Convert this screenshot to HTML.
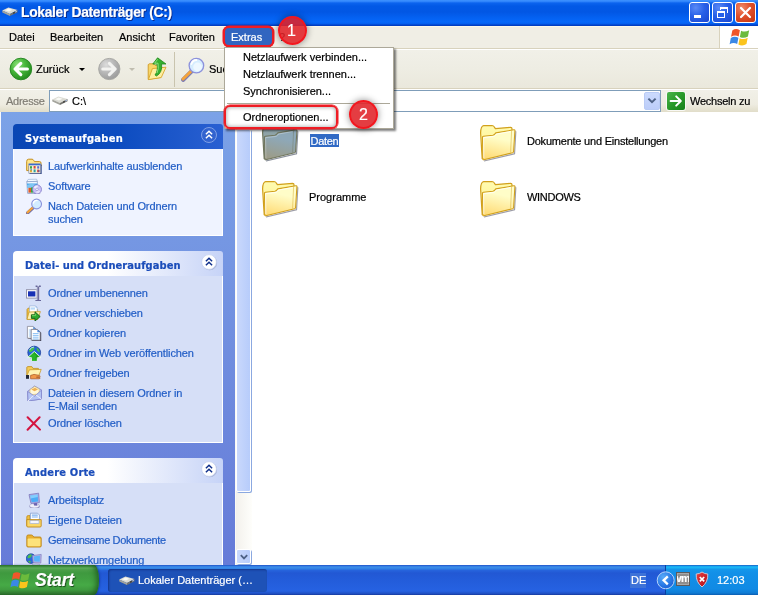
<!DOCTYPE html>
<html lang="de">
<head>
<meta charset="utf-8">
<title>Lokaler Datenträger (C:)</title>
<style>
*{box-sizing:border-box;margin:0;padding:0}
html,body{width:758px;height:595px;overflow:hidden;background:#fff}
body{position:relative;will-change:transform;-webkit-text-stroke:.2px;font-family:"Liberation Sans",sans-serif;font-size:11px;color:#000}
.abs{position:absolute}
.t{position:absolute;white-space:nowrap;line-height:14px;height:14px}
/* title bar */
#title{left:0;top:0;width:758px;height:26px;background:linear-gradient(180deg,#3f93ff 0,#2f84fb 1.5px,#0c64ee 3px,#0259e6 6px,#0257e4 12px,#0460f0 17px,#0668fa 22px,#0560f0 23.5px,#0344cc 25px,#0238b8 26px)}
#title .tt{left:21px;top:5px;color:#fff;font-weight:bold;font-size:13.8px;letter-spacing:-0.3px;line-height:16px;height:16px;text-shadow:1px 1px 0 #0a2a8a}
.cb{position:absolute;top:2px;width:21px;height:21px;border:1px solid #fff;border-radius:3px;background:radial-gradient(circle at 30% 25%,#5a8af6 0,#2860e8 45%,#1a46d0 100%)}
.cb.x{background:radial-gradient(circle at 30% 25%,#f08a68 0,#e0502c 45%,#c4340f 100%)}
/* menu */
#menu{left:0;top:26px;width:758px;height:22px;background:#f0eee5;border-top:1px solid #fbf8ea}
#menu .t{top:3px}
#logo{left:719px;top:26px;width:39px;height:22px;background:#fff;border-left:1px solid #d8d2bd}
#l1{left:0;top:48px;width:758px;height:1px;background:#d8d2bd}
#l2{left:0;top:49px;width:758px;height:1px;background:#fff}
/* toolbar */
#tb{left:0;top:50px;width:758px;height:38px;background:linear-gradient(180deg,#f1f0e8 0,#eeede3 50%,#eae8dc 100%)}
#l3{left:0;top:88px;width:758px;height:1px;background:#d8d2bd}
#addr{left:0;top:89px;width:758px;height:23px;background:linear-gradient(180deg,#f1f0e8 0,#eeece1 65%,#e1ddc9 100%);border-top:1px solid #fff}
#ainp{left:49px;top:90px;width:612px;height:22px;background:#fff;border:1px solid #7f9db9}
/* left pane */
#lp{left:0;top:112px;width:235px;height:453px;background:linear-gradient(180deg,#7ba2e7 0,#667bd8 100%);overflow:hidden}
.ph{position:absolute;left:13px;width:210px;height:25px;border-radius:4px 3px 0 0}
.ph .t{left:12px;top:8px;font-weight:bold;font-size:11px;letter-spacing:.2px;font-family:"DejaVu Sans Condensed","DejaVu Sans","Liberation Sans",sans-serif}
.ph.a{background:linear-gradient(90deg,#0a46b4 0,#0c4cc0 50%,#2a60d2 100%);color:#fff}
.ph.b{background:linear-gradient(90deg,#fff 0,#fff 45%,#c6d3f7 100%);color:#1b4dba}
.pb{position:absolute;left:13px;width:210px;background:#d6dff7;border:1px solid #fff;border-top:0}
.pb.a{background:#eff3ff}
.lk{position:absolute;left:48px;color:#215dc6;white-space:nowrap;line-height:13px;letter-spacing:-0.1px}
.chev{position:absolute;left:188px;top:3px;width:18px;height:18px}
.ic{position:absolute;left:26px;width:16px;height:16px}
/* scrollbar */
#sb{left:235px;top:112px;width:17px;height:453px;background:linear-gradient(90deg,#f3f1ec 0,#fefefb 100%);border-left:1px solid #fbfaf4}
.sbtn{position:absolute;left:0;width:15px;background:linear-gradient(90deg,#c9d8fc 0,#b7ccfb 100%);border:1px solid #fff;border-radius:2px;box-shadow:1px 1px 0 #8ba8e0}
/* content */
.fl{position:absolute;white-space:nowrap;line-height:13px;height:13px}
/* taskbar */
#task{left:0;top:565px;width:758px;height:30px;background:linear-gradient(180deg,#1f50c2 0,#2f74e0 1px,#3d8ee8 2px,#3384e6 3.5px,#2663dc 5.5px,#2258d4 8px,#235cda 15px,#2662e2 26px,#1f50c4 28.5px,#173a9c 30px)}
/* annotations */
.rb{position:absolute;border:2px solid #ee1c24;border-radius:6px;box-shadow:0 0 0 .5px #ee1c24,inset 0 0 4px rgba(0,0,0,.4)}
.rc{position:absolute;width:29px;height:29px;border-radius:50%;background:rgba(224,34,40,.88);border:2px solid rgba(242,22,30,.96);color:#fff;text-align:center;font-size:16px;line-height:25px;box-shadow:0 0 7px rgba(0,0,0,.45)}
</style>
</head>
<body>
<!-- title bar -->
<div id="title" class="abs">
  <svg class="abs drv" style="left:2px;top:7px" width="16" height="10" viewBox="0 0 16 10"><path d="M.2 3.4 L6.4 .5 L15.5 3.1 L8 7Z" fill="#dcdcd4"/><path d="M3 3.2 L6.6 1.6 L10.4 2.8 L7 4.4Z" fill="#fafaf6"/><path d="M.2 3.4 L8 7 L8 9 L.4 5.4Z" fill="#a4a49c"/><path d="M8 7 L15.5 3.1 L15.5 5.2 L8 9Z" fill="#74746f"/><path d="M11.4 5.3 L12.6 4.7 L12.6 6.3 L11.4 6.9Z" fill="#2a2a2a"/><path d="M13.4 4.5 L14.8 3.8 L14.8 4.8 L13.4 5.5Z" fill="#b4ccff"/></svg>
  <div class="t tt">Lokaler Datenträger (C:)</div>
  <div class="cb" style="left:689px"><div class="abs" style="left:4px;top:12px;width:7px;height:3px;background:#fff"></div></div>
  <div class="cb" style="left:712px"><div class="abs" style="left:7px;top:4px;width:8px;height:6px;border:1px solid #fff;border-top-width:2px;border-left:0;border-bottom:0"></div><div class="abs" style="left:7px;top:4px;width:1px;height:3px;background:#fff"></div><div class="abs" style="left:4px;top:8px;width:8px;height:7px;border:1px solid #fff;border-top-width:2px;background:#2860e8"></div></div>
  <div class="cb x" style="left:735px"><svg class="abs" style="left:3px;top:3px" width="13" height="13" viewBox="0 0 13 13"><path d="M2 2 L11 11 M11 2 L2 11" stroke="#fff" stroke-width="2.2" stroke-linecap="round"/></svg></div>
</div>
<!-- menu bar -->
<div id="menu" class="abs">
  <div class="t" style="left:9px">Datei</div>
  <div class="t" style="left:50px">Bearbeiten</div>
  <div class="t" style="left:119px">Ansicht</div>
  <div class="t" style="left:169px">Favoriten</div>
  <div class="rb" style="left:223px;top:-1px;width:51px;height:21px;background:#3165c0;box-shadow:0 0 0 .5px #ee1c24"></div>
  <div class="t" style="left:231px;color:#fff">Extras</div>
  <div class="t" style="left:279px">?</div>
</div>
<div id="logo" class="abs"><svg class="abs" style="left:9px;top:0px" width="22" height="22" viewBox="-1 -1 17 18"><path d="M1.2 2.6 Q4 .6 7.4 2.4 L6.4 7.6 Q3.2 5.8 .2 7.8Z" fill="#f0562a"/><path d="M8.4 2.8 Q11.6 4.4 15 2.4 L14 7.6 Q10.8 9.6 7.4 8Z" fill="#6cbb3c"/><path d="M0 8.8 Q3 6.8 6.2 8.6 L5.2 13.8 Q2.2 12 -1 14Z" fill="#3a88e6"/><path d="M7.2 9 Q10.6 10.6 13.8 8.6 L12.8 13.8 Q9.6 15.8 6.2 14.2Z" fill="#fbc41c"/></svg></div>
<div id="l1" class="abs"></div><div id="l2" class="abs"></div>
<div id="tb" class="abs"></div>
<div id="l3" class="abs"></div>
<div id="addr" class="abs"></div>
<div id="ainp" class="abs"></div>
<!-- left pane -->
<div id="lp" class="abs">
  <div class="abs" style="left:0;top:0;width:1px;height:453px;background:#f4f7fe"></div>
  <div class="ph a" style="top:12px"><div class="t" style="letter-spacing:.3px">Systemaufgaben</div></div>
  <div class="pb a" style="top:37px;height:87px"></div>
  <div class="ph b" style="top:139px"><div class="t" style="letter-spacing:.08px">Datei- und Ordneraufgaben</div></div>
  <div class="pb" style="top:164px;height:167px"></div>
  <div class="ph b" style="top:346px"><div class="t" style="letter-spacing:.18px">Andere Orte</div></div>
  <div class="pb" style="top:371px;height:100px"></div>
<!--LINKS-->
  <div class="lk" style="top:48px">Laufwerkinhalte ausblenden</div>
  <div class="lk" style="top:68px">Software</div>
  <div class="lk" style="top:88px">Nach Dateien und Ordnern<br>suchen</div>
  <div class="lk" style="top:175px">Ordner umbenennen</div>
  <div class="lk" style="top:195px">Ordner verschieben</div>
  <div class="lk" style="top:215px">Ordner kopieren</div>
  <div class="lk" style="top:235px">Ordner im Web veröffentlichen</div>
  <div class="lk" style="top:255px">Ordner freigeben</div>
  <div class="lk" style="top:275px">Dateien in diesem Ordner in<br>E-Mail senden</div>
  <div class="lk" style="top:305px">Ordner löschen</div>
  <div class="lk" style="top:382px">Arbeitsplatz</div>
  <div class="lk" style="top:402px">Eigene Dateien</div>
  <div class="lk" style="top:422px;letter-spacing:-0.35px">Gemeinsame Dokumente</div>
  <div class="lk" style="top:442px">Netzwerkumgebung</div>
<!--ICONS-->
  <svg class="abs" style="left:26px;top:46px" width="16" height="16" viewBox="0 0 16 16"><path d="M.7 12.6 L.7 3.4 Q.7 1.2 2.6 1.2 L6 1.2 Q7 1.2 7.6 2.2 L8.4 3.6 L13.6 3.6 Q15 3.6 15 5 L15 8 L3 8 L3 12.6Z" fill="#ffe68c" stroke="#c48e1c" stroke-width="1"/><rect x="3.6" y="6.6" width="12" height="9.6" fill="#1c3278"/><rect x="2.8" y="5.8" width="11.8" height="9.4" fill="#f5f1da" stroke="#7c86a8" stroke-width=".6"/><rect x="2.8" y="5.8" width="11.8" height="1.5" fill="#3a6cd0"/><rect x="4" y="8.2" width="2" height="2.4" fill="#3aa848"/><rect x="7.6" y="8" width="2" height="2.6" fill="#d84838"/><rect x="11.2" y="8.2" width="2" height="2.4" fill="#5a6cd0"/><rect x="4" y="11.6" width="2" height="2.6" fill="#e8b030"/><rect x="4.6" y="11.2" width="1.2" height="1.2" fill="#3a78d8"/><rect x="7.6" y="11.4" width="2" height="2.8" fill="#2aa0a0"/><rect x="11.2" y="11.6" width="2" height="2.6" fill="#d84030"/><rect x="12.4" y="12.2" width="1.2" height="1.6" fill="#3a62c8"/></svg>
  <svg class="abs" style="left:26px;top:66px" width="16" height="16" viewBox="0 0 16 16"><ellipse cx="8" cy="15.2" rx="6.6" ry="1" fill="#8a8aa8" opacity=".5"/><path d="M.8 3.6 L2.2 1.4 L10.6 1.2 L11.4 3.4Z" fill="#f4faff" stroke="#9ab0d4" stroke-width=".7"/><path d="M.8 3.6 L11.4 3.4 L11 15 L1.6 15.2Z" fill="#eef6ff" stroke="#8098c4" stroke-width=".7"/><path d="M1 5.6 L11.3 5.4 L11.2 9.6 L1.2 9.8Z" fill="#4aa6ea"/><path d="M1.2 7 L6 5.6 L11.3 7.4 L11.2 9.6 L1.3 9.8Z" fill="#8cd0f8" opacity=".8"/><rect x="2.4" y="9.8" width="2.6" height="4.8" fill="#e05a28"/><rect x="5" y="9.4" width="2.4" height="5.2" fill="#34a83e"/><circle cx="11" cy="11.4" r="4.5" fill="#c8c0f6" stroke="#8078c8" stroke-width=".8"/><path d="M7.6 9.6 A4 4 0 0 1 12 7.4 L11 11.4Z" fill="#fff" opacity=".7"/><path d="M14.4 13.2 A4 4 0 0 1 10 15.4 L11 11.4Z" fill="#fff" opacity=".5"/><circle cx="11" cy="11.4" r="1.3" fill="#f6f4ff" stroke="#8a84c8" stroke-width=".6"/></svg>
  <svg class="abs" style="left:26px;top:86px" width="16" height="16" viewBox="0 0 16 16"><path d="M7.6 9.4 L1.6 15" stroke="#6a6aa8" stroke-width="3.2" stroke-linecap="round"/><path d="M7.4 9 L1.6 14.4" stroke="#f3a23a" stroke-width="2.2" stroke-linecap="round"/><circle cx="10.6" cy="6" r="4.9" fill="#d2ecff" stroke="#8c94dc" stroke-width="1.1"/><path d="M7.4 5 A3.6 3.6 0 0 1 11 2.4" stroke="#fff" stroke-width="1.4" fill="none" stroke-linecap="round"/></svg>
  <svg class="abs" style="left:26px;top:173px" width="16" height="16" viewBox="0 0 16 16"><rect x=".5" y="4.7" width="10.6" height="8.4" fill="#fff" stroke="#8c8ca4" stroke-width=".9"/><rect x="2" y="6.3" width="7.4" height="5.2" fill="#1830b4"/><path d="M12.2 1.6 L12.2 15.2" stroke="#c4c4dc" stroke-width="3.2"/><path d="M12.2 1.4 L12.2 15.4 M9.6 1.2 L11.4 1.2 M13 1.2 L14.8 1.2 M9.4 15.6 L15 15.6" stroke="#66669a" stroke-width="1.4" fill="none"/></svg>
  <svg class="abs" style="left:26px;top:193px" width="16" height="16" viewBox="0 0 16 16"><path d="M1 4.6 L1 14.4 L11.6 14.4 L11.6 4.6 L7 4.6 L5.8 3.2 L2 3.2Z" fill="#f0c048" stroke="#b88a1e" stroke-width=".8"/><path d="M3.6 .9 L9.6 .9 L11.2 2.6 L11.2 8 L3.6 8Z" fill="#fff" stroke="#9ab4dc" stroke-width=".7"/><path d="M4.6 2.4 L9 2.4 L9 4.6 L4.6 4.6Z" fill="#b8d8f8"/><path d="M9.6 .9 L9.6 2.6 L11.2 2.6Z" fill="#78a8e8"/><path d="M1 14.4 L3 7 L14.4 6.6 L11.6 14.4Z" fill="#fdf0b0" stroke="#c99a2a" stroke-width=".8"/><path d="M5.4 9.8 L9 9.8 L9 6.8 L14.2 11.6 L9 16 L9 13.4 L5.4 13.4Z" fill="#2ea82e" stroke="#125c12" stroke-width=".9" stroke-linejoin="round"/><path d="M6 10.6 L9.6 10.6 L9.6 8.6" stroke="#7ee070" stroke-width=".8" fill="none"/></svg>
  <svg class="abs" style="left:26px;top:213px" width="16" height="16" viewBox="0 0 16 16"><path d="M2.2 2.4 L8.4 2.4 L10.8 4.8 L10.8 14 L2.2 14Z" fill="#50505e"/><path d="M1.4 1.4 L7.2 1.4 L9.8 4 L9.8 13.2 L1.4 13.2Z" fill="#fff" stroke="#8a8a98" stroke-width=".8"/><path d="M7.2 1.4 L7.2 4 L9.8 4Z" fill="#5a94e0"/><path d="M2.8 5 L5 5 M2.8 7 L5 7 M2.8 9 L5 9 M2.8 11 L5 11" stroke="#9cc8f4" stroke-width="1"/><path d="M6 5.2 L12.6 5.2 L15.2 7.8 L15.2 16 L6 16Z" fill="#3c3c4c"/><path d="M5.2 4.4 L11.4 4.4 L14.2 7.2 L14.2 15.2 L5.2 15.2Z" fill="#fff" stroke="#6c6c7c" stroke-width=".8"/><path d="M11.4 4.4 L11.4 7.2 L14.2 7.2Z" fill="#4a8ae0"/><path d="M6.8 8.6 L12.6 8.6 M6.8 10.4 L12.6 10.4 M6.8 12.2 L12.6 12.2 M6.8 14 L12.6 14" stroke="#8cc0f4" stroke-width="1"/></svg>
  <svg class="abs" style="left:26px;top:233px" width="16" height="16" viewBox="0 0 16 16"><circle cx="8.2" cy="7.6" r="6.4" fill="#2466d8" stroke="#183c98" stroke-width=".8"/><path d="M3 5.4 Q4.4 2 8 1.8 Q9.4 3.4 7.4 5 Q6 7.2 3.6 7Z" fill="#48c048"/><path d="M10.4 2.6 Q13.2 3.8 14 6.8 Q12.4 7 11.2 5.4Z" fill="#48c048"/><path d="M3.6 5 A5 5 0 0 1 8 2" stroke="#b0d8ff" stroke-width="1" fill="none"/><path d="M8.3 6.4 L15 12.6 L11.2 12.6 L11.2 16.4 L5.4 16.4 L5.4 12.6 L1.6 12.6Z" fill="#28b428" stroke="#f0fff0" stroke-width=".9" stroke-linejoin="round"/><path d="M8.3 8.2 L12 11.8 L10.2 11.8 L10.2 15.6" stroke="#168a16" stroke-width="1" fill="none" opacity=".6"/></svg>
  <svg class="abs" style="left:26px;top:253px" width="16" height="16" viewBox="0 0 16 16"><path d="M.8 2.2 L.8 10.6 L12.4 10.6 L12.4 3.4 L7 3.4 L5.8 1.6 L1.8 1.6Z" fill="#f4cc58" stroke="#bc8c1e" stroke-width=".8"/><path d="M.8 10.8 L3.4 4.8 L15.2 4.4 L12.8 10.8Z" fill="#fff2b0" stroke="#c99a2a" stroke-width=".8"/><rect x="0" y="10" width="3.2" height="3.8" fill="#222838"/><rect x="3.2" y="10" width="1.4" height="3.8" fill="#f4f4f8"/><path d="M4.6 10.4 L8 9.4 L13.6 10.4 Q15 11 13.6 11.8 L10.4 12.2 L14 12.6 Q14.6 13.6 13 13.8 L4.6 13.8Z" fill="#f09848" stroke="#a85420" stroke-width=".7"/></svg>
  <svg class="abs" style="left:26px;top:273px" width="16" height="16" viewBox="0 0 16 16"><path d="M1.6 6.4 L8.6 1 L15.6 5 L15.4 14 L2 16Z" fill="#c8d0f8" stroke="#8488cc" stroke-width=".9"/><path d="M4 4.6 L8.8 1.6 L13.2 4 L13.2 9 L4 9.8Z" fill="#fff8d8" stroke="#d8b860" stroke-width=".6"/><path d="M5.4 4.6 L9 2.8 L12 4.4 L8.4 6.2Z" fill="#f0b050"/><path d="M1.6 6.4 L8.6 11.2 L15.6 5 L15.4 14 L2 16Z" fill="#b4c4f4" stroke="#8488cc" stroke-width=".8"/><path d="M2 16 L7.4 10.4 M15.4 14 L10 10" stroke="#f0f4ff" stroke-width=".9"/></svg>
  <svg class="abs" style="left:26px;top:303px" width="16" height="16" viewBox="0 0 16 16"><path d="M1.6 2.2 L14 14.6 M13.6 2.2 L1.6 14.8" stroke="#d41440" stroke-width="2" stroke-linecap="round" fill="none"/></svg>
  <svg class="abs" style="left:26px;top:380px" width="16" height="16" viewBox="0 0 16 16"><ellipse cx="8.6" cy="14.4" rx="5" ry="2.2" fill="#5a5490" opacity=".7"/><ellipse cx="8.4" cy="13.8" rx="4.8" ry="2.2" fill="#f0f0fa" stroke="#a0a0cc" stroke-width=".6"/><path d="M7.4 10 L11 11 L11.4 13.8 L8 13.4Z" fill="#6a62b0"/><path d="M3 2.6 L12.6 1.2 L13.4 10.6 L5 11.4Z" fill="#b4b0e6" stroke="#7c78bc" stroke-width=".8" stroke-linejoin="round"/><path d="M4.2 3.6 L11.6 2.4 L12.2 9.6 L5.6 10.2Z" fill="#4cacf6"/><path d="M4.2 3.6 L11.6 2.4 L11.8 5 L4.6 6.6Z" fill="#8cd4ff" opacity=".85"/></svg>
  <svg class="abs" style="left:26px;top:400px" width="16" height="16" viewBox="0 0 16 16"><path d="M.8 5 Q.8 3.6 2.2 3.6 L4 3.6 L4 13.8 L.8 13.8Z" fill="#f0c040" stroke="#c08a1c" stroke-width=".8"/><path d="M4.4 1.2 L11.6 1.2 L13.4 3 L13.4 9 L4.4 9Z" fill="#fff" stroke="#7c9cd0" stroke-width=".8"/><path d="M5.8 3.2 L11.8 3.2 M5.8 5 L11.8 5" stroke="#7cb0f0" stroke-width="1.2"/><path d="M.8 7.6 L15.2 7.6 L15.2 14 Q15.2 15 14 15 L2 15 Q.8 15 .8 14Z" fill="#fbd868" stroke="#c08a1c" stroke-width=".9"/><rect x="4" y="8.6" width="9" height="3" fill="#f4f6ff" stroke="#98a8d0" stroke-width=".6"/></svg>
  <svg class="abs" style="left:26px;top:420px" width="16" height="16" viewBox="0 0 16 16"><path d="M.8 4.4 Q.8 3 2.2 3 L5.4 3 Q6.4 3 7 4 L7.8 5 L14 5 Q15.2 5 15.2 6.2 L15.2 14 Q15.2 15 14 15 L2 15 Q.8 15 .8 14Z" fill="#e8b030" stroke="#bc861a" stroke-width=".9"/><path d="M1.6 7.4 Q1.6 6.6 2.6 6.6 L13.4 6.6 Q14.4 6.6 14.4 7.4 L14.4 13.4 Q14.4 14.2 13.4 14.2 L2.6 14.2 Q1.6 14.2 1.6 13.4Z" fill="#fde27a"/></svg>
  <svg class="abs" style="left:26px;top:440px" width="16" height="16" viewBox="0 0 16 16"><circle cx="5" cy="6.6" r="4.8" fill="#2c6ad8" stroke="#1a3c98" stroke-width=".7"/><path d="M1.6 4.6 Q3 2 5.6 2.4 Q6.4 4 4.6 5.6 Q3 6.8 1.6 6Z" fill="#4cc04c"/><path d="M2 9 Q4 8 5 10 L3.6 11Z" fill="#4cc04c"/><path d="M6.6 3.6 L15.2 2.4 L14.8 11 L7.2 10.6Z" fill="#b8b4e8" stroke="#8a86c4" stroke-width=".8"/><path d="M7.8 4.6 L14 3.6 L13.8 9.8 L8.2 9.6Z" fill="#58b4f8"/><ellipse cx="10" cy="13.6" rx="4.4" ry="1.8" fill="#dcdcf0" stroke="#9494c0" stroke-width=".6"/></svg>
  <svg class="abs" style="left:200.3px;top:14.4px" width="18" height="18" viewBox="0 0 18 18"><circle cx="9" cy="9" r="7.5" fill="#3263cf" stroke="#7f9fe6" stroke-width="1"/><path d="M5.9 8.3 L9 5.3 L12.1 8.3 M5.9 12.3 L9 9.3 L12.1 12.3" stroke="#fff" stroke-width="1.5" fill="none"/></svg>
  <svg class="abs" style="left:200.3px;top:141.4px" width="19" height="19" viewBox="0 0 19 19"><circle cx="9.7" cy="9.8" r="7.4" fill="#8a94b8" opacity=".55"/><circle cx="9" cy="9" r="7.4" fill="#fff" stroke="#c4d0f0" stroke-width=".8"/><path d="M5.9 8.3 L9 5.3 L12.1 8.3 M5.9 12.3 L9 9.3 L12.1 12.3" stroke="#10308c" stroke-width="1.5" fill="none"/></svg>
  <svg class="abs" style="left:200.3px;top:348.4px" width="19" height="19" viewBox="0 0 19 19"><circle cx="9.7" cy="9.8" r="7.4" fill="#8a94b8" opacity=".55"/><circle cx="9" cy="9" r="7.4" fill="#fff" stroke="#c4d0f0" stroke-width=".8"/><path d="M5.9 8.3 L9 5.3 L12.1 8.3 M5.9 12.3 L9 9.3 L12.1 12.3" stroke="#10308c" stroke-width="1.5" fill="none"/></svg>
</div>
<div id="sb" class="abs">
  <div class="sbtn" style="top:0;height:16px"><svg class="abs" style="left:3px;top:4px" width="8" height="6" viewBox="0 0 8 6"><path d="M.8 4.8 L4 1.6 L7.2 4.8" stroke="#4d6185" stroke-width="1.8" fill="none"/></svg></div>
  <div class="sbtn" style="top:17px;height:363px"></div>
  <div class="sbtn" style="top:437px;height:15px"><svg class="abs" style="left:3px;top:4px" width="8" height="6" viewBox="0 0 8 6"><path d="M.8 1.2 L4 4.4 L7.2 1.2" stroke="#4d6185" stroke-width="1.8" fill="none"/></svg></div>
</div>

<!-- toolbar content -->
<div id="tbc" class="abs" style="left:0;top:50px;width:758px;height:38px">
  <svg class="abs" style="left:8px;top:6px" width="26" height="26" viewBox="0 0 26 26"><defs><radialGradient id="gb" cx=".35" cy=".3" r=".75"><stop offset="0" stop-color="#8fe27c"/><stop offset=".45" stop-color="#49b83c"/><stop offset="1" stop-color="#218a1c"/></radialGradient></defs><circle cx="12.9" cy="13" r="10.8" fill="url(#gb)" stroke="#2a8a26" stroke-width="1"/><path d="M19.4 13 L8 13 M12.8 7.4 L7 13 L12.8 18.6" stroke="#fff" stroke-width="3.1" fill="none" stroke-linecap="round" stroke-linejoin="round"/></svg>
  <div class="t" style="left:36px;top:12px">Zurück</div>
  <div class="abs" style="left:79px;top:18px;border:3px solid transparent;border-top:3px solid #000;border-bottom:0;width:0;height:0"></div>
  <svg class="abs" style="left:96px;top:6px" width="26" height="26" viewBox="0 0 26 26"><defs><radialGradient id="gf" cx=".35" cy=".3" r=".75"><stop offset="0" stop-color="#dcdcdc"/><stop offset=".5" stop-color="#b8b8b8"/><stop offset="1" stop-color="#9a9a9a"/></radialGradient></defs><circle cx="13.3" cy="13" r="10.6" fill="url(#gf)" stroke="#a8a8a4" stroke-width="1"/><path d="M6.8 13 L18.2 13 M13.4 7.4 L19.2 13 L13.4 18.6" stroke="#f2f2f0" stroke-width="3.1" fill="none" stroke-linecap="round" stroke-linejoin="round"/></svg>
  <div class="abs" style="left:129px;top:18px;border:3px solid transparent;border-top:3px solid #c0bdb0;border-bottom:0;width:0;height:0"></div>
  <svg class="abs" style="left:146px;top:6px" width="22" height="26" viewBox="0 0 22 26"><path d="M2.2 8.6 L2.2 23.4 L14.6 21.4 L14.6 9.4 L9 9.4 L7.6 7.8 L3.4 7.8Z" fill="#f8d668" stroke="#cf9a26" stroke-width=".9"/><path d="M2.4 23.6 L6.4 12.6 L20 11.2 L15.2 21.6Z" fill="#fdeea0" stroke="#d9a62c" stroke-width=".9"/><path d="M11.6 1.8 L20 8 L15.6 8 Q16.6 16.4 10.6 20 L9 19 Q12.4 14.6 11 8 L6.8 8Z" fill="#35b02f" stroke="#1f8a1c" stroke-width=".8" stroke-linejoin="round"/><path d="M11.6 3.4 L8.6 7.2 L12 7.2 Q13 13 11 17" stroke="#8fe080" stroke-width="1" fill="none"/></svg>
  <div class="abs" style="left:174px;top:2px;width:1px;height:35px;background:#c9c4ae"></div>
  <svg class="abs" style="left:180px;top:6px" width="26" height="26" viewBox="0 0 26 26"><path d="M11.4 15.6 L3.2 23.8" stroke="#7c7cb4" stroke-width="4.2" stroke-linecap="round"/><path d="M11 15.2 L3 23" stroke="#f4a43c" stroke-width="3" stroke-linecap="round"/><circle cx="16.4" cy="9.6" r="7.3" fill="#d6edff" stroke="#8d92dc" stroke-width="1.3"/><circle cx="17.6" cy="11" r="4.4" fill="#eef8ff"/><path d="M11.4 8 A5.4 5.4 0 0 1 16.4 4" stroke="#fff" stroke-width="1.8" fill="none" stroke-linecap="round"/></svg>
  <div class="t" style="left:209px;top:12px">Suchen</div>
</div>
<!-- address -->
<div class="t" style="left:6px;top:94px;color:#7f7c73;letter-spacing:-0.25px">Adresse</div>
<svg class="abs drv" style="left:52px;top:96px" width="16" height="10" viewBox="0 0 16 10"><path d="M.2 3.4 L6.4 .5 L15.5 3.1 L8 7Z" fill="#dcdcd4"/><path d="M3 3.2 L6.6 1.6 L10.4 2.8 L7 4.4Z" fill="#fafaf6"/><path d="M.2 3.4 L8 7 L8 9 L.4 5.4Z" fill="#a4a49c"/><path d="M8 7 L15.5 3.1 L15.5 5.2 L8 9Z" fill="#74746f"/><path d="M11.4 5.3 L12.6 4.7 L12.6 6.3 L11.4 6.9Z" fill="#2a2a2a"/><path d="M13.4 4.5 L14.8 3.8 L14.8 4.8 L13.4 5.5Z" fill="#b4ccff"/></svg>
<div class="t" style="left:72px;top:94px">C:\</div>
<div class="abs" style="left:644px;top:92px;width:16px;height:18px;background:linear-gradient(180deg,#cbdafd 0,#bccdf9 100%);border:1px solid #b9cbf5;border-radius:2px"></div>
<svg class="abs" style="left:647px;top:97px" width="10" height="8" viewBox="0 0 10 8"><path d="M1.4 1.6 L5 5.2 L8.6 1.6" stroke="#4d6185" stroke-width="2" fill="none"/></svg>
<div class="abs" style="left:666px;top:91px;width:20px;height:20px;background:#f8f8f4;border-radius:3px"></div>
<div class="abs" style="left:667px;top:92px;width:18px;height:18px;background:linear-gradient(135deg,#4ab34a 0,#2a9a2a 50%,#17801a 100%);border-radius:2px"></div>
<svg class="abs" style="left:669px;top:94px" width="14" height="14" viewBox="0 0 14 14"><path d="M1.6 7 L11.6 7 M7.2 2.4 L11.8 7 L7.2 11.6" stroke="#fff" stroke-width="2" fill="none" stroke-linecap="round" stroke-linejoin="round"/></svg>
<div class="t" style="left:690px;top:94px;letter-spacing:-0.25px">Wechseln zu</div>
<!-- content -->
<!--FOLDERS-->
<svg class="abs" style="left:256px;top:120px" width="50" height="46" viewBox="0 0 50 46"><defs><linearGradient id="g1a" x1="0" y1="0" x2="0" y2="1"><stop offset="0" stop-color="#90a8b0"/><stop offset="1" stop-color="#8c9890"/></linearGradient><linearGradient id="g1b" x1=".62" y1="0" x2=".38" y2="1"><stop offset="0" stop-color="#8ea8b8"/><stop offset=".3" stop-color="#8ea8b8"/><stop offset="1" stop-color="#9c9c88"/></linearGradient></defs><path d="M9.6 40.5 L40 33.3 L41.3 10.6 L42.4 11.6 L41.1 34.3 L10.2 41.6Z" fill="#3c4658" opacity=".6"/><path d="M8.2 38.6 L6.6 13 Q6.8 6 9.6 5.7 L18 5.5 Q19.4 5.5 20.2 6.8 L21.4 8.6 L36.6 7.3 Q38 7.3 38 8.8 L38 20Z" fill="url(#g1a)" stroke="#70765e" stroke-width="1.2" stroke-linejoin="round"/><path d="M8.5 17.2 Q8.4 16.4 9.4 16.3 L18.8 15.3 Q20.2 15.1 21 13.9 L21.8 12.9 L39.8 9.8 Q41 9.6 40.9 10.8 L39.6 31.6 Q39.6 32.5 38.6 32.8 L9.8 39.7 Q8.8 39.9 8.8 38.8Z" fill="url(#g1b)" stroke="#70765e" stroke-width="1.1" stroke-linejoin="round"/><path d="M37.6 10.8 L36.6 32.4" stroke="#70765e" stroke-width=".8" opacity=".55"/><path d="M9.8 38 L9.6 17.6 L19.2 16.5 Q21 16.2 21.8 15 L22.4 14 L36.6 11.6" stroke="#fff" stroke-width=".9" fill="none" opacity=".35"/></svg>
<svg class="abs" style="left:256px;top:176px" width="50" height="46" viewBox="0 0 50 46"><defs><linearGradient id="g2a" x1="0" y1="0" x2="0" y2="1"><stop offset="0" stop-color="#fffbb0"/><stop offset="1" stop-color="#ffef8c"/></linearGradient><linearGradient id="g2b" x1=".62" y1="0" x2=".38" y2="1"><stop offset="0" stop-color="#fffdc8"/><stop offset=".3" stop-color="#fffdc8"/><stop offset="1" stop-color="#ffdc78"/></linearGradient></defs><path d="M9.6 40.5 L40 33.3 L41.3 10.6 L42.4 11.6 L41.1 34.3 L10.2 41.6Z" fill="#5c5c6c" opacity=".6"/><path d="M8.2 38.6 L6.6 13 Q6.8 6 9.6 5.7 L18 5.5 Q19.4 5.5 20.2 6.8 L21.4 8.6 L36.6 7.3 Q38 7.3 38 8.8 L38 20Z" fill="url(#g2a)" stroke="#d1a01c" stroke-width="1.2" stroke-linejoin="round"/><path d="M8.5 17.2 Q8.4 16.4 9.4 16.3 L18.8 15.3 Q20.2 15.1 21 13.9 L21.8 12.9 L39.8 9.8 Q41 9.6 40.9 10.8 L39.6 31.6 Q39.6 32.5 38.6 32.8 L9.8 39.7 Q8.8 39.9 8.8 38.8Z" fill="url(#g2b)" stroke="#d1a01c" stroke-width="1.1" stroke-linejoin="round"/><path d="M37.6 10.8 L36.6 32.4" stroke="#d1a01c" stroke-width=".8" opacity=".55"/><path d="M9.8 38 L9.6 17.6 L19.2 16.5 Q21 16.2 21.8 15 L22.4 14 L36.6 11.6" stroke="#fff" stroke-width=".9" fill="none" opacity=".85"/></svg>
<svg class="abs" style="left:474px;top:120px" width="50" height="46" viewBox="0 0 50 46"><defs><linearGradient id="g3a" x1="0" y1="0" x2="0" y2="1"><stop offset="0" stop-color="#fffbb0"/><stop offset="1" stop-color="#ffef8c"/></linearGradient><linearGradient id="g3b" x1=".62" y1="0" x2=".38" y2="1"><stop offset="0" stop-color="#fffdc8"/><stop offset=".3" stop-color="#fffdc8"/><stop offset="1" stop-color="#ffdc78"/></linearGradient></defs><path d="M9.6 40.5 L40 33.3 L41.3 10.6 L42.4 11.6 L41.1 34.3 L10.2 41.6Z" fill="#5c5c6c" opacity=".6"/><path d="M8.2 38.6 L6.6 13 Q6.8 6 9.6 5.7 L18 5.5 Q19.4 5.5 20.2 6.8 L21.4 8.6 L36.6 7.3 Q38 7.3 38 8.8 L38 20Z" fill="url(#g3a)" stroke="#d1a01c" stroke-width="1.2" stroke-linejoin="round"/><path d="M8.5 17.2 Q8.4 16.4 9.4 16.3 L18.8 15.3 Q20.2 15.1 21 13.9 L21.8 12.9 L39.8 9.8 Q41 9.6 40.9 10.8 L39.6 31.6 Q39.6 32.5 38.6 32.8 L9.8 39.7 Q8.8 39.9 8.8 38.8Z" fill="url(#g3b)" stroke="#d1a01c" stroke-width="1.1" stroke-linejoin="round"/><path d="M37.6 10.8 L36.6 32.4" stroke="#d1a01c" stroke-width=".8" opacity=".55"/><path d="M9.8 38 L9.6 17.6 L19.2 16.5 Q21 16.2 21.8 15 L22.4 14 L36.6 11.6" stroke="#fff" stroke-width=".9" fill="none" opacity=".85"/></svg>
<svg class="abs" style="left:474px;top:176px" width="50" height="46" viewBox="0 0 50 46"><defs><linearGradient id="g4a" x1="0" y1="0" x2="0" y2="1"><stop offset="0" stop-color="#fffbb0"/><stop offset="1" stop-color="#ffef8c"/></linearGradient><linearGradient id="g4b" x1=".62" y1="0" x2=".38" y2="1"><stop offset="0" stop-color="#fffdc8"/><stop offset=".3" stop-color="#fffdc8"/><stop offset="1" stop-color="#ffdc78"/></linearGradient></defs><path d="M9.6 40.5 L40 33.3 L41.3 10.6 L42.4 11.6 L41.1 34.3 L10.2 41.6Z" fill="#5c5c6c" opacity=".6"/><path d="M8.2 38.6 L6.6 13 Q6.8 6 9.6 5.7 L18 5.5 Q19.4 5.5 20.2 6.8 L21.4 8.6 L36.6 7.3 Q38 7.3 38 8.8 L38 20Z" fill="url(#g4a)" stroke="#d1a01c" stroke-width="1.2" stroke-linejoin="round"/><path d="M8.5 17.2 Q8.4 16.4 9.4 16.3 L18.8 15.3 Q20.2 15.1 21 13.9 L21.8 12.9 L39.8 9.8 Q41 9.6 40.9 10.8 L39.6 31.6 Q39.6 32.5 38.6 32.8 L9.8 39.7 Q8.8 39.9 8.8 38.8Z" fill="url(#g4b)" stroke="#d1a01c" stroke-width="1.1" stroke-linejoin="round"/><path d="M37.6 10.8 L36.6 32.4" stroke="#d1a01c" stroke-width=".8" opacity=".55"/><path d="M9.8 38 L9.6 17.6 L19.2 16.5 Q21 16.2 21.8 15 L22.4 14 L36.6 11.6" stroke="#fff" stroke-width=".9" fill="none" opacity=".85"/></svg>
<!--/FOLDERS-->
<div class="abs" style="left:310px;top:134px;width:29px;height:13px;background:#316ac5"></div>
<div class="fl" style="left:310px;top:135px;color:#fff;letter-spacing:-0.35px;padding-left:.6px">Daten</div>
<div class="fl" style="left:309px;top:191px">Programme</div>
<div class="fl" style="left:527px;top:135px;letter-spacing:-0.22px">Dokumente und Einstellungen</div>
<div class="fl" style="left:527px;top:191px;letter-spacing:-0.3px">WINDOWS</div>
<!-- dropdown -->
<div id="dd" class="abs" style="left:224px;top:47px;width:170px;height:82px;background:#fff;border:1px solid #aca899;box-shadow:2px 2px 2px rgba(0,0,0,.5)">
  <div class="fl" style="left:18px;top:3px">Netzlaufwerk verbinden...</div>
  <div class="fl" style="left:18px;top:20px">Netzlaufwerk trennen...</div>
  <div class="fl" style="left:18px;top:37px">Synchronisieren...</div>
  <div class="abs" style="left:2px;top:55px;width:163px;height:1px;background:#aca899"></div>
  <div class="fl" style="left:18px;top:63px">Ordneroptionen...</div>
</div>
<!-- annotations -->
<div class="rb" style="left:224px;top:105px;width:114px;height:24px"></div>
<div class="rc" style="left:278px;top:16px;padding-right:2px">1</div>
<div class="rc" style="left:349px;top:100px">2</div>
<div id="task" class="abs">
  <div class="abs" style="left:0;top:0;width:99px;height:30px;border-radius:0 5px 5px 0/0 15px 15px 0;background:linear-gradient(180deg,#2c762c 0,#3f8f3f 1.5px,#5fae5d 3px,#4a9f48 5px,#3f993f 8px,#41a041 14px,#46aa46 20px,#3f9a3f 25px,#347f34 28px,#2a6a2a 30px);box-shadow:inset -5px 0 6px -3px #1f5a1f, 1px 0 2px rgba(10,30,120,.5)"></div>
  <svg class="abs" style="left:10px;top:5px" width="21" height="20" viewBox="-1.4 -.4 17.6 16.8"><path d="M1.2 2.6 Q4 .6 7.4 2.4 L6.4 7.6 Q3.2 5.8 .2 7.8Z" fill="#f0562a"/><path d="M8.4 2.8 Q11.6 4.4 15 2.4 L14 7.6 Q10.8 9.6 7.4 8Z" fill="#6cbb3c"/><path d="M0 8.8 Q3 6.8 6.2 8.6 L5.2 13.8 Q2.2 12 -1 14Z" fill="#3a88e6"/><path d="M7.2 9 Q10.6 10.6 13.8 8.6 L12.8 13.8 Q9.6 15.8 6.2 14.2Z" fill="#fbc41c"/></svg>
  <div class="t" style="left:35px;top:4px;color:#fff;font-weight:bold;font-style:italic;font-size:17.5px;line-height:22px;height:22px;text-shadow:1px 1px 1px #1a4a1a;letter-spacing:-0.2px">Start</div>
  <div class="abs" style="left:108px;top:4px;width:159px;height:23px;background:#1e52b7;border-radius:3px;box-shadow:inset 1px 1px 2px #14348a"></div>
  <svg class="abs drv" style="left:119px;top:11px" width="16" height="10" viewBox="0 0 16 10"><path d="M.2 3.4 L6.4 .5 L15.5 3.1 L8 7Z" fill="#dcdcd4"/><path d="M3 3.2 L6.6 1.6 L10.4 2.8 L7 4.4Z" fill="#fafaf6"/><path d="M.2 3.4 L8 7 L8 9 L.4 5.4Z" fill="#a4a49c"/><path d="M8 7 L15.5 3.1 L15.5 5.2 L8 9Z" fill="#74746f"/><path d="M11.4 5.3 L12.6 4.7 L12.6 6.3 L11.4 6.9Z" fill="#2a2a2a"/><path d="M13.4 4.5 L14.8 3.8 L14.8 4.8 L13.4 5.5Z" fill="#b4ccff"/></svg>
  <div class="t" style="left:138px;top:8px;color:#fff">Lokaler Datenträger (…</div>
  <div class="abs" style="left:665px;top:0;width:93px;height:30px;background:linear-gradient(180deg,#1a48b8 0,#18a4ee 1px,#19b4f4 2.5px,#1496ea 4.5px,#1290e8 8px,#118ae4 24px,#0f7cd4 28px,#0c5cb0 30px);border-left:1px solid #0a3f9f"></div>
  <div class="abs" style="left:630px;top:8px;width:16px;height:15px;background:#3d72d8"></div>
  <div class="t" style="left:631px;top:8px;color:#fff">DE</div>
  <svg class="abs" style="left:655px;top:5px" width="21" height="21" viewBox="0 0 21 21"><defs><radialGradient id="gc" cx=".35" cy=".3" r=".8"><stop offset="0" stop-color="#58aaf8"/><stop offset=".6" stop-color="#2a7ae6"/><stop offset="1" stop-color="#1a5cd4"/></radialGradient></defs><circle cx="10.7" cy="10.3" r="8.5" fill="url(#gc)" stroke="#b8d4fa" stroke-width="1"/><path d="M12.8 6.3 L8.6 10.3 L12.8 14.3" stroke="#fff" stroke-width="2.3" fill="none"/></svg>
  <div class="abs" style="left:676px;top:7px;width:14px;height:14px;background:#8e8e8e;border:1px solid #5c5c5c;box-shadow:inset 0 0 0 1px #a8a8a8;color:#fff;font-weight:bold;font-size:10.5px;line-height:11px;text-align:center;letter-spacing:-0.9px;text-indent:-1px;overflow:hidden">vm</div>
  <svg class="abs" style="left:695px;top:6px" width="14" height="17" viewBox="0 0 14 17"><defs><linearGradient id="gs" x1="0" y1="0" x2="1" y2="1"><stop offset="0" stop-color="#f04040"/><stop offset="1" stop-color="#a80c18"/></linearGradient></defs><path d="M7 1 Q9.6 3 12.8 3 Q13.2 11 7 16 Q.8 11 1.2 3 Q4.4 3 7 1Z" fill="url(#gs)" stroke="#c4c8d8" stroke-width="1"/><path d="M4.8 6 L9.2 10.4 M9.2 6 L4.8 10.4" stroke="#fff" stroke-width="1.7"/></svg>
  <div class="t" style="left:717px;top:8px;color:#fff">12:03</div>
</div>
</body>
</html>
